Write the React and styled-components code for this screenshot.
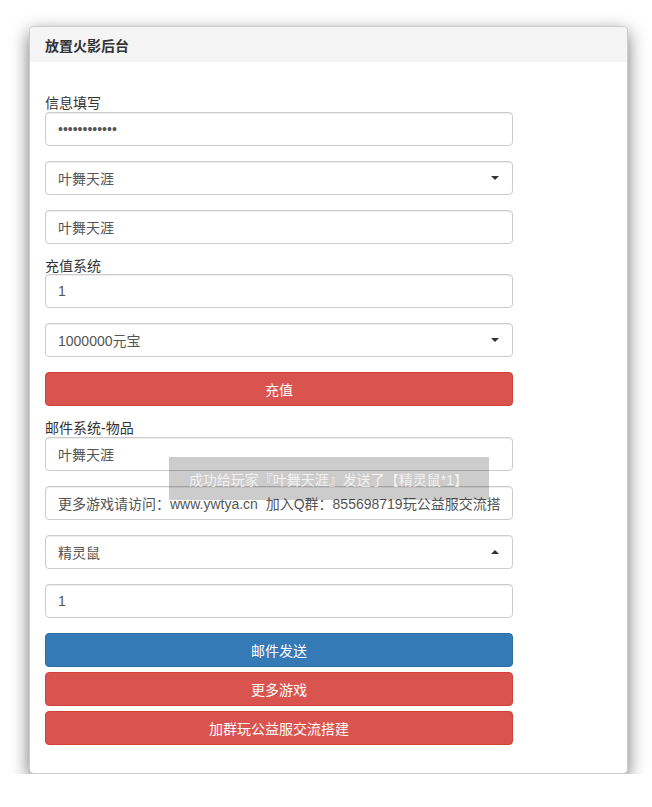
import React from 'react';
import styled, { createGlobalStyle } from 'styled-components';

const GlobalStyle = createGlobalStyle`
  html, body {
    margin: 0;
    padding: 0;
    background: #fff;
    font-family: "Liberation Sans", "Noto Sans CJK SC", sans-serif;
    font-size: 14px;
    color: #333;
  }
  * { box-sizing: border-box; }
`;

const Card = styled.div`
  position: relative;
  width: 599px;
  margin: 26px 0 0 29px;
  background: #fff;
  border: 1px solid rgba(0, 0, 0, 0.2);
  border-radius: 5px;
  box-shadow: 0 6px 18px rgba(0, 0, 0, 0.55);
`;

const Header = styled.div`
  height: 35px;
  display: flex;
  align-items: center;
  padding: 0 15px;
  background: #f5f5f5;
  border-radius: 5px 5px 0 0;
  font-weight: bold;
  font-size: 14px;
  color: #333;
`;

const Body = styled.div`
  display: flex;
  flex-direction: column;
  width: 468px;
  margin-left: 15px;
  padding: 34px 0 28px;
`;

const Label = styled.div`
  line-height: 15.5px;
  font-size: 14px;
  color: #333;
`;

const Field = styled.input`
  display: block;
  width: 100%;
  height: 34px;
  margin-bottom: 15px;
  padding: 0 12px;
  border: 1px solid #ccc;
  border-radius: 4px;
  background: #fff;
  font-family: inherit;
  font-size: 14px;
  color: #555;
  outline: none;
  box-shadow: inset 0 1px 1px rgba(0, 0, 0, 0.075);
`;

const Select = styled.div`
  display: flex;
  align-items: center;
  justify-content: space-between;
  height: 34px;
  margin-bottom: 15px;
  padding: 0 13px 0 12px;
  border: 1px solid #ccc;
  border-radius: 4px;
  color: #555;
  box-shadow: inset 0 1px 1px rgba(0, 0, 0, 0.075);
`;

const Caret = styled.span`
  width: 0;
  height: 0;
  border-left: 4px solid transparent;
  border-right: 4px solid transparent;
  ${(p) => (p.$up ? 'border-bottom: 4px solid #333;' : 'border-top: 4px solid #333;')}
`;

const Button = styled.div`
  display: flex;
  align-items: center;
  justify-content: center;
  height: 34px;
  margin-bottom: ${(p) => p.$gap}px;
  border: 1px solid ${(p) => (p.$blue ? '#2e6da4' : '#d43f3a')};
  border-radius: 4px;
  background: ${(p) => (p.$blue ? '#337ab7' : '#d9534f')};
  color: #fff;
  font-size: 14px;
  &:last-child { margin-bottom: 0; }
`;

const Toast = styled.div`
  position: absolute;
  top: 430px;
  left: 50%;
  transform: translateX(-50%);
  width: 320px;
  height: 43px;
  display: flex;
  align-items: center;
  justify-content: center;
  background: rgba(0, 0, 0, 0.2);
  color: rgba(255, 255, 255, 0.75);
  font-size: 14px;
  white-space: nowrap;
`;

const SelectBox = ({ value, up }) => (
  <Select>
    <span>{value}</span>
    <Caret $up={up} />
  </Select>
);

export default function App() {
  return (
    <>
      <GlobalStyle />
      <Card>
        <Header>放置火影后台</Header>
        <Body>
          <Label>信息填写</Label>
          <Field type="password" readOnly defaultValue="123456789012" />
          <SelectBox value="叶舞天涯" />
          <Field readOnly defaultValue="叶舞天涯" />

          <Label>充值系统</Label>
          <Field readOnly defaultValue="1" />
          <SelectBox value="1000000元宝" />
          <Button $gap={15}>充值</Button>

          <Label>邮件系统-物品</Label>
          <Field readOnly defaultValue="叶舞天涯" />
          <Field readOnly defaultValue="更多游戏请访问：www.ywtya.cn  加入Q群：855698719玩公益服交流搭建" />
          <SelectBox value="精灵鼠" up />
          <Field readOnly defaultValue="1" />
          <Button $blue $gap={5}>邮件发送</Button>
          <Button $gap={5}>更多游戏</Button>
          <Button $gap={5}>加群玩公益服交流搭建</Button>
        </Body>
        <Toast>成功给玩家『叶舞天涯』发送了【精灵鼠*1】</Toast>
      </Card>
    </>
  );
}
